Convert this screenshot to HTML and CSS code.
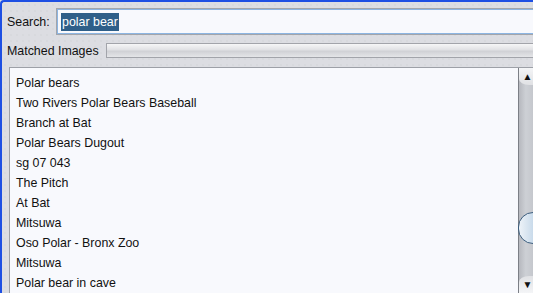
FILE: index.html
```html
<!DOCTYPE html>
<html lang="en">
<head>
  <meta charset="UTF-8">
  <title>Image Search</title>
  <link rel="stylesheet" href="styles.css">
</head>
<body>

  <div class="frame">
    <!-- Search field -->
    <div class="search-row">
      <label class="label">Search:</label>
      <div class="search-box"><span class="selected">polar bear</span></div>
    </div>

    <!-- Progress -->
    <div class="progress-row">
      <span class="label">Matched Images</span>
      <div class="progress"></div>
    </div>

    <!-- Results -->
    <div class="results">
      <ul class="result-list">
        <li>Polar bears</li>
        <li>Two Rivers Polar Bears Baseball</li>
        <li>Branch at Bat</li>
        <li>Polar Bears Dugout</li>
        <li>sg 07 043</li>
        <li>The Pitch</li>
        <li>At Bat</li>
        <li>Mitsuwa</li>
        <li>Oso Polar - Bronx Zoo</li>
        <li>Mitsuwa</li>
        <li>Polar bear in cave</li>
      </ul>
      <div class="scrollbar">
        <div class="arrow up">&#9650;</div>
        <div class="track">
          <div class="thumb"></div>
        </div>
        <div class="arrow down">&#9660;</div>
      </div>
    </div>
  </div>

</body>
</html>
```

FILE: styles.css
```css
* {
  box-sizing: border-box;
}

html, body {
  margin: 0;
  padding: 0;
  height: 100%;
  overflow: hidden;
}

body {
  font-family: 'Liberation Sans', Arial, sans-serif;
  font-size: 12.4px;
  color: #111;
  background: #dcdde2;
}

.frame {
  height: 293px;
  border-top: 2px solid #1d4fe3;
  border-left: 2px solid #1d4fe3;
  border-top-left-radius: 4px;
  background-color: #dcdde2;
  background-image: radial-gradient(#d2d3d8 0.6px, transparent 0.8px);
  background-size: 6px 6px;
  display: flex;
  flex-direction: column;
}

.label {
  color: #111;
}

.search-row {
  display: flex;
  align-items: center;
  padding: 6px 0 0 5px;
}

.search-row .label {
  width: 49px;
}

.search-box {
  flex: 1;
  height: 27px;
  margin-right: -4px;
  border: 1px solid #a3a5ab;
  box-shadow: inset 0 0 0 1px #8cb5e2;
  background: #f8f9fd;
  padding: 4px 0 0 4px;
}

.selected {
  display: inline-block;
  background: #2f5f89;
  color: #fff;
  height: 18px;
  line-height: 18px;
  padding: 0 1px;
}

.progress-row {
  display: flex;
  align-items: center;
  padding: 8px 0 0 5px;
}

.progress-row .label {
  width: 99px;
}

.progress {
  flex: 1;
  height: 15px;
  margin-right: -4px;
  border: 1px solid #a2a4aa;
  background: linear-gradient(#f6f6f7, #e0e1e4 45%, #d0d1d5 55%, #e4e5e8);
}

.results {
  display: flex;
  margin: 9px -4px 0 7px;
  flex: 1;
  border: 1px solid #9da0a7;
  border-bottom: none;
  overflow: hidden;
}

.result-list {
  list-style: none;
  margin: 0;
  padding: 5px 0 0 6px;
  flex: 1;
  background: #f8f9fd;
}

.result-list li {
  height: 20px;
  line-height: 20px;
}

.scrollbar {
  width: 18px;
  display: flex;
  flex-direction: column;
  border-left: 1px solid #7c7f86;
  background: linear-gradient(to right, #b6b8be, #cdd0d5 40%, #c2c4ca);
}

.arrow {
  height: 17px;
  font-size: 10px;
  text-align: center;
  color: #111;
  line-height: 17px;
}

.arrow.up {
  border-bottom-left-radius: 10px 6px;
  background: linear-gradient(#f4f5f7, #e0e1e4);
}

.arrow.down {
  border-top-left-radius: 10px 6px;
  background: linear-gradient(#e0e1e4, #f4f5f7);
}

.track {
  flex: 1;
  position: relative;
}

.thumb {
  position: absolute;
  top: 127px;
  left: -1px;
  width: 30px;
  height: 32px;
  border: 1px solid #3d5e7e;
  border-radius: 16px;
  background: linear-gradient(to right, #eef3f8, #c2d6e8 60%, #9fbcd6);
}
```
